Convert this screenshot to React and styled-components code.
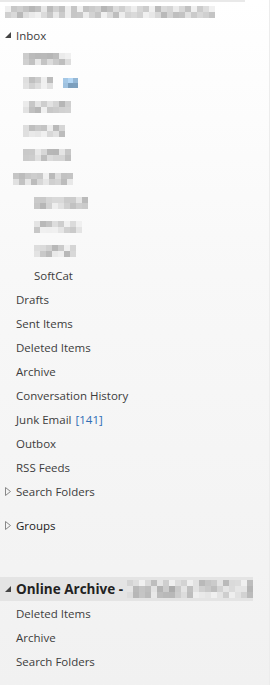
import React from 'react'
import styled, { createGlobalStyle } from 'styled-components'

const GlobalStyle = createGlobalStyle`
  html, body {
    margin: 0;
    padding: 0;
    background: #f1f1f1;
  }
  body {
    font-family: "Open Sans", "Noto Sans", Arial, sans-serif;
  }
`

const Pane = styled.nav`
  width: 270px;
  height: 685px;
  box-sizing: border-box;
  overflow: hidden;
  background: linear-gradient(to bottom, #ffffff 0%, #f8f8f8 40%, #f1f1f1 100%);
  border-right: 1px solid #ececec;
`

const TopEdge = styled.div`
  height: 2px;
  width: 245px;
  background: #e9e9e9;
`

const AccountRow = styled.div`
  height: 20px;
  display: flex;
  align-items: center;
  padding-left: 5px;
`

const Row = styled.div`
  height: 24px;
  display: flex;
  align-items: center;
  padding-left: ${p => p.$indent}px;
  font-size: 11.5px;
  color: ${p => (p.$dark ? '#222' : '#3c3c3c')};
  white-space: nowrap;
`

const Spacer = styled.div`
  height: ${p => p.$h}px;
`

const ArchiveHeader = styled.div`
  height: 24px;
  width: 253px;
  display: flex;
  align-items: center;
  background: #e4e4e4;
  font-size: 13.5px;
  font-weight: 700;
  color: #222;
  white-space: nowrap;
`

const Caret = styled.span`
  width: 16px;
  flex: none;
  display: flex;
  justify-content: center;
  align-items: center;
  margin-left: ${p => (p.$inline ? 0 : -16)}px;
`

const Label = styled.span`
  display: inline-block;
`

const Count = styled.span`
  color: #2f6db5;
  margin-left: 4px;
`

const MosaicGrid = styled.span`
  display: inline-grid;
  grid-template-columns: repeat(${p => p.$cols}, ${p => p.$cell}px);
  grid-auto-rows: ${p => p.$cell}px;
  margin-left: ${p => p.$gap || 0}px;
  filter: blur(0.4px);
`

const Cell = styled.span`
  display: block;
`

const rand = (seed, i) => {
  const x = Math.sin(seed * 91.7 + i * 12.9898) * 43758.5453
  return x - Math.floor(x)
}

// pixelated (redacted) text block
const Mosaic = ({ cols, rows = 2, seed, cell = 5, gap, tint }) => {
  const cells = []
  for (let r = 0; r < rows; r++) {
    for (let c = 0; c < cols; c++) {
      const i = r * cols + c
      const v = rand(seed, i)
      const edge = r === 0 || r === rows - 1 ? 14 : 0
      const val = Math.min(Math.round(168 + v * 62 + edge), 240)
      const bg = tint
        ? `rgb(${val - 60}, ${val - 25}, ${Math.min(val + 5, 245)})`
        : `rgb(${val}, ${val}, ${val})`
      cells.push(<Cell key={i} style={{ background: bg }} />)
    }
  }
  return (
    <MosaicGrid $cols={cols} $cell={cell} $gap={gap}>
      {cells}
    </MosaicGrid>
  )
}

const Expanded = ({ inline }) => (
  <Caret $inline={inline}>
    <svg width="6" height="6" viewBox="0 0 6 6">
      <polygon points="6,0 6,6 0,6" fill="#444" />
    </svg>
  </Caret>
)

const Collapsed = () => (
  <Caret>
    <svg width="6" height="9" viewBox="0 0 6 9">
      <polygon points="0.5,0.5 5.5,4.5 0.5,8.5" fill="none" stroke="#888" strokeWidth="1" />
    </svg>
  </Caret>
)

const Folder = ({ indent = 16, children, ...rest }) => (
  <Row $indent={indent} {...rest}>
    {children}
  </Row>
)

export default function App() {
  return (
    <>
      <GlobalStyle />
      <Pane>
        <TopEdge />
        <AccountRow>
          <Mosaic cols={35} seed={1} cell={6} />
        </AccountRow>
        <Spacer $h={1} />

        <Folder>
          <Expanded />
          <Label>Inbox</Label>
        </Folder>
        <Folder indent={23}><Mosaic cols={8} seed={2} cell={6} /></Folder>
        <Folder indent={23}>
          <Mosaic cols={5} seed={3} cell={6} />
          <Mosaic cols={3} seed={4} cell={5} gap={10} tint />
        </Folder>
        <Folder indent={23}><Mosaic cols={8} seed={5} cell={6} /></Folder>
        <Folder indent={23}><Mosaic cols={7} seed={6} cell={6} /></Folder>
        <Folder indent={23}><Mosaic cols={8} seed={7} cell={6} /></Folder>
        <Folder indent={13}><Mosaic cols={10} seed={8} cell={6} /></Folder>
        <Folder indent={34}><Mosaic cols={9} seed={9} cell={6} /></Folder>
        <Folder indent={34}><Mosaic cols={8} seed={10} cell={6} /></Folder>
        <Folder indent={34}><Mosaic cols={7} seed={11} cell={6} /></Folder>
        <Folder indent={34}>SoftCat</Folder>

        <Folder>Drafts</Folder>
        <Folder>Sent Items</Folder>
        <Folder>Deleted Items</Folder>
        <Folder>Archive</Folder>
        <Folder>Conversation History</Folder>
        <Folder>
          Junk Email<Count>[141]</Count>
        </Folder>
        <Folder>Outbox</Folder>
        <Folder>RSS Feeds</Folder>
        <Folder>
          <Collapsed />
          <Label>Search Folders</Label>
        </Folder>

        <Spacer $h={10} />
        <Folder $dark>
          <Collapsed />
          <Label>Groups</Label>
        </Folder>

        <Spacer $h={40} />
        <ArchiveHeader>
          <Expanded inline />
          <Label>Online Archive -</Label>
          <Mosaic cols={21} rows={3} seed={12} cell={6} gap={4} />
        </ArchiveHeader>
        <Folder>Deleted Items</Folder>
        <Folder>Archive</Folder>
        <Folder>Search Folders</Folder>
      </Pane>
    </>
  )
}
